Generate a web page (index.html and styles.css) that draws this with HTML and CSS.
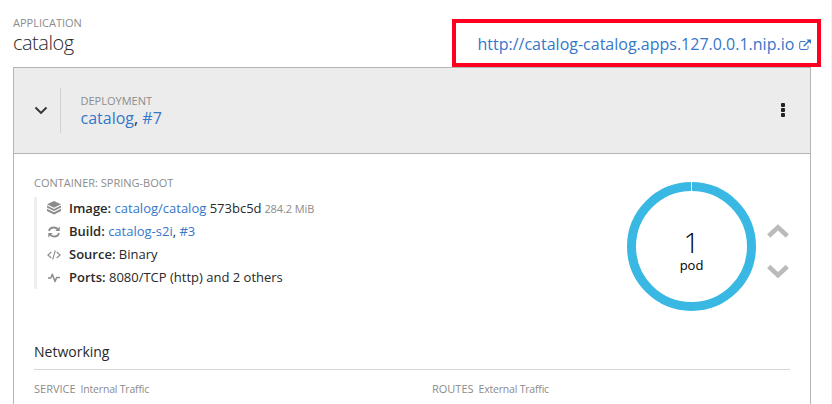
FILE: index.html
```html
<!DOCTYPE html>
<html lang="en">
<head>
<meta charset="utf-8">
<title>catalog</title>
<link rel="stylesheet" href="styles.css">
</head>
<body>
<main class="page">
  <header class="app-header">
    <div class="app-title">
      <div class="label">APPLICATION</div>
      <h1 class="app-name">catalog</h1>
    </div>
    <div class="route">
      <a class="route-link">http://catalog-catalog.apps.127.0.0.1.nip.io</a>
      <svg class="external" viewBox="0 0 12 12"><path d="M6.5 2.5H2Q.7 2.5.7 3.8V9.200Q.7 10.500 2 10.500H7.800Q9.100 10.500 9.100 9.200V6.800" fill="none" stroke="currentColor" stroke-width="1"/><path d="M4.700 7.300 10 2" stroke="currentColor" stroke-width="1.500"/><path d="M7.500.5H12V5Z" fill="currentColor"/></svg>
    </div>
  </header>
  <section class="card">
    <div class="card-header">
      <div class="toggle"><svg width="14" height="10" viewBox="0 0 14 10"><path d="M1.500 1.500 7 7 12.500 1.500" fill="none" stroke="#333" stroke-width="1.900"/></svg></div>
      <div class="deployment">
        <div class="label">DEPLOYMENT</div>
        <div class="dep-name"><a>catalog</a>, <a>#7</a></div>
      </div>
      <div class="kebab"><i></i><i></i><i></i></div>
    </div>
    <div class="card-body">
      <div class="overview">
        <div class="details">
          <div class="label container-label">CONTAINER: SPRING-BOOT</div>
          <ul class="facts">
            <li><svg class="layers" viewBox="0 0 14 14"><path d="M7 0 14 3.300 7 6.800 0 3.300Z"/><path d="M0 4.500 7 8 14 4.500V6.600L7 10.100 0 6.600Z"/><path d="M0 7.800 7 11.300 14 7.800V9.900L7 13.400 0 9.900Z"/></svg><span><b>Image:</b> <a>catalog/catalog</a> 573bc5d <small>284.2 MiB</small></span></li>
            <li><svg viewBox="0 0 14 14"><path d="M2 6Q2.800 2.500 7 2.500 9.300 2.500 11 4.500M12 8Q11.200 11.500 7 11.500 4.700 11.500 3 9.500" fill="none" stroke="currentColor" stroke-width="1.800"/><path d="M12.700 1.500V6H8.200ZM1.300 12.500V8H5.800Z"/></svg><span><b>Build:</b> <a>catalog-s2i</a>, <a>#3</a></span></li>
            <li><svg viewBox="0 0 14 14"><path d="M4.300 4 .9 7 4.300 10M9.700 4 13.100 7 9.700 10M8.300 2.500 5.700 11.500" fill="none" stroke="currentColor" stroke-width="1.100"/></svg><span><b>Source:</b> Binary</span></li>
            <li><svg viewBox="0 0 14 14"><path d="M1 7H3.800L5.300 3.300 8 10.500 9.600 6.600H13" fill="none" stroke="currentColor" stroke-width="1.500" stroke-linejoin="round"/></svg><span><b>Ports:</b> 8080/TCP (http) and 2 others</span></li>
          </ul>
        </div>
        <div class="pods">
          <div class="donut"><span class="count">1</span><span class="unit">pod</span></div>
          <div class="scaling">
            <svg width="22" height="14" viewBox="0 0 22 14"><path d="M1.700 12 11 3.300 20.300 12" fill="none" stroke="#bbb" stroke-width="4.600"/></svg>
            <svg width="22" height="14" viewBox="0 0 22 14"><path d="M1.700 2.500 11 11.200 20.300 2.500" fill="none" stroke="#bbb" stroke-width="4.600"/></svg>
          </div>
        </div>
      </div>
      <h2 class="networking">Networking</h2>
      <div class="traffic">
        <div><span class="kind">SERVICE</span><span class="desc">Internal Traffic</span></div>
        <div><span class="kind">ROUTES</span><span class="desc">External Traffic</span></div>
      </div>
    </div>
  </section>
</main>
</body>
</html>
```
FILE: styles.css
```css
* { box-sizing: border-box; }
body { margin: 0; background: #fff; color: #292929; font: 13px/23px "Open Sans", sans-serif; overflow: hidden; }
.page { width: 832px; height: 404px; padding: 0 20px 0 13px; border-right: 1px solid #f2f2f2; overflow: hidden; }
a { color: #3577c9; }
.label { color: #8c8c8c; font-size: 11px; line-height: 14px; white-space: nowrap; }
.app-header { display: flex; justify-content: space-between; height: 67px; margin-right: -10px; }
.app-title { padding-top: 16px; }
.app-name { margin: 0; font-size: 20px; font-weight: 300; line-height: 26px; letter-spacing: -.5px; }
.route { display: flex; align-items: center; width: 369px; height: 48px; margin-top: 19px; padding: 2px 6px 0 21.500px; border: 4px solid #ff0020; white-space: nowrap; justify-content: space-between; }
.route-link { font-size: 16px; line-height: 22px; }
.external { width: 12px; height: 12px; margin-top: 1px; color: #3577c9; }
.card { height: 360px; border: 1px solid #b5b5b5; }
.card-header { display: flex; align-items: center; height: 86px; padding: 0 25px 0 20px; background: #ececec; border-bottom: 1px solid #b5b5b5; }
.toggle { display: flex; align-items: center; width: 27px; height: 45px; border-right: 1px solid #d1d1d1; }
.deployment { flex: 1; padding: 2px 0 0 19.500px; }
.dep-name { font-size: 16px; line-height: 21px; }
.kebab { display: flex; flex-direction: column; gap: 1px; padding-bottom: 1px; }
.kebab i { width: 4px; height: 4px; border-radius: 1px; background: #222; }
.card-body { padding: 22px 20px 0; }
.overview { display: flex; justify-content: space-between; height: 165px; }
.facts { list-style: none; margin: 7px 0 0; padding: 0 0 0 10px; border-left: 3px solid #eee; white-space: nowrap; }
.facts li { display: flex; align-items: center; height: 23px; gap: 8px; }
.facts svg { width: 14px; height: 14px; color: #8c8c8c; fill: currentColor; }
.facts .layers { margin-bottom: 2px; }
.facts b { font-weight: 600; }
.facts small { margin-left: -.5px; font-size: 11px; letter-spacing: -.1px; color: #8c8c8c; }
.pods { display: flex; padding-top: 6px; }
.donut { position: relative; display: flex; flex-direction: column; align-items: center; width: 129px; height: 129px; padding-top: 36px; border: 9px solid #39b8e3; border-radius: 50%; color: #000; }
.donut::before { content: ""; position: absolute; top: -9px; left: 55px; width: 1px; height: 9px; background: #fff; }
.count { font-size: 28px; font-weight: 300; line-height: 30px; }
.unit { line-height: 16px; }
.scaling { display: flex; flex-direction: column; gap: 26px; padding: 41.500px 1px 0 11px; }
.networking { margin: 0; height: 29px; border-bottom: 1px solid #d8d8d8; font-size: 14px; font-weight: 400; line-height: 22px; }
.traffic { display: grid; grid-template-columns: 398px 1fr; padding-top: 10px; color: #8c8c8c; font-size: 11px; line-height: 18px; }
.kind { margin-right: 5px; }
.desc { font-size: 10.500px; letter-spacing: -.2px; }
```
